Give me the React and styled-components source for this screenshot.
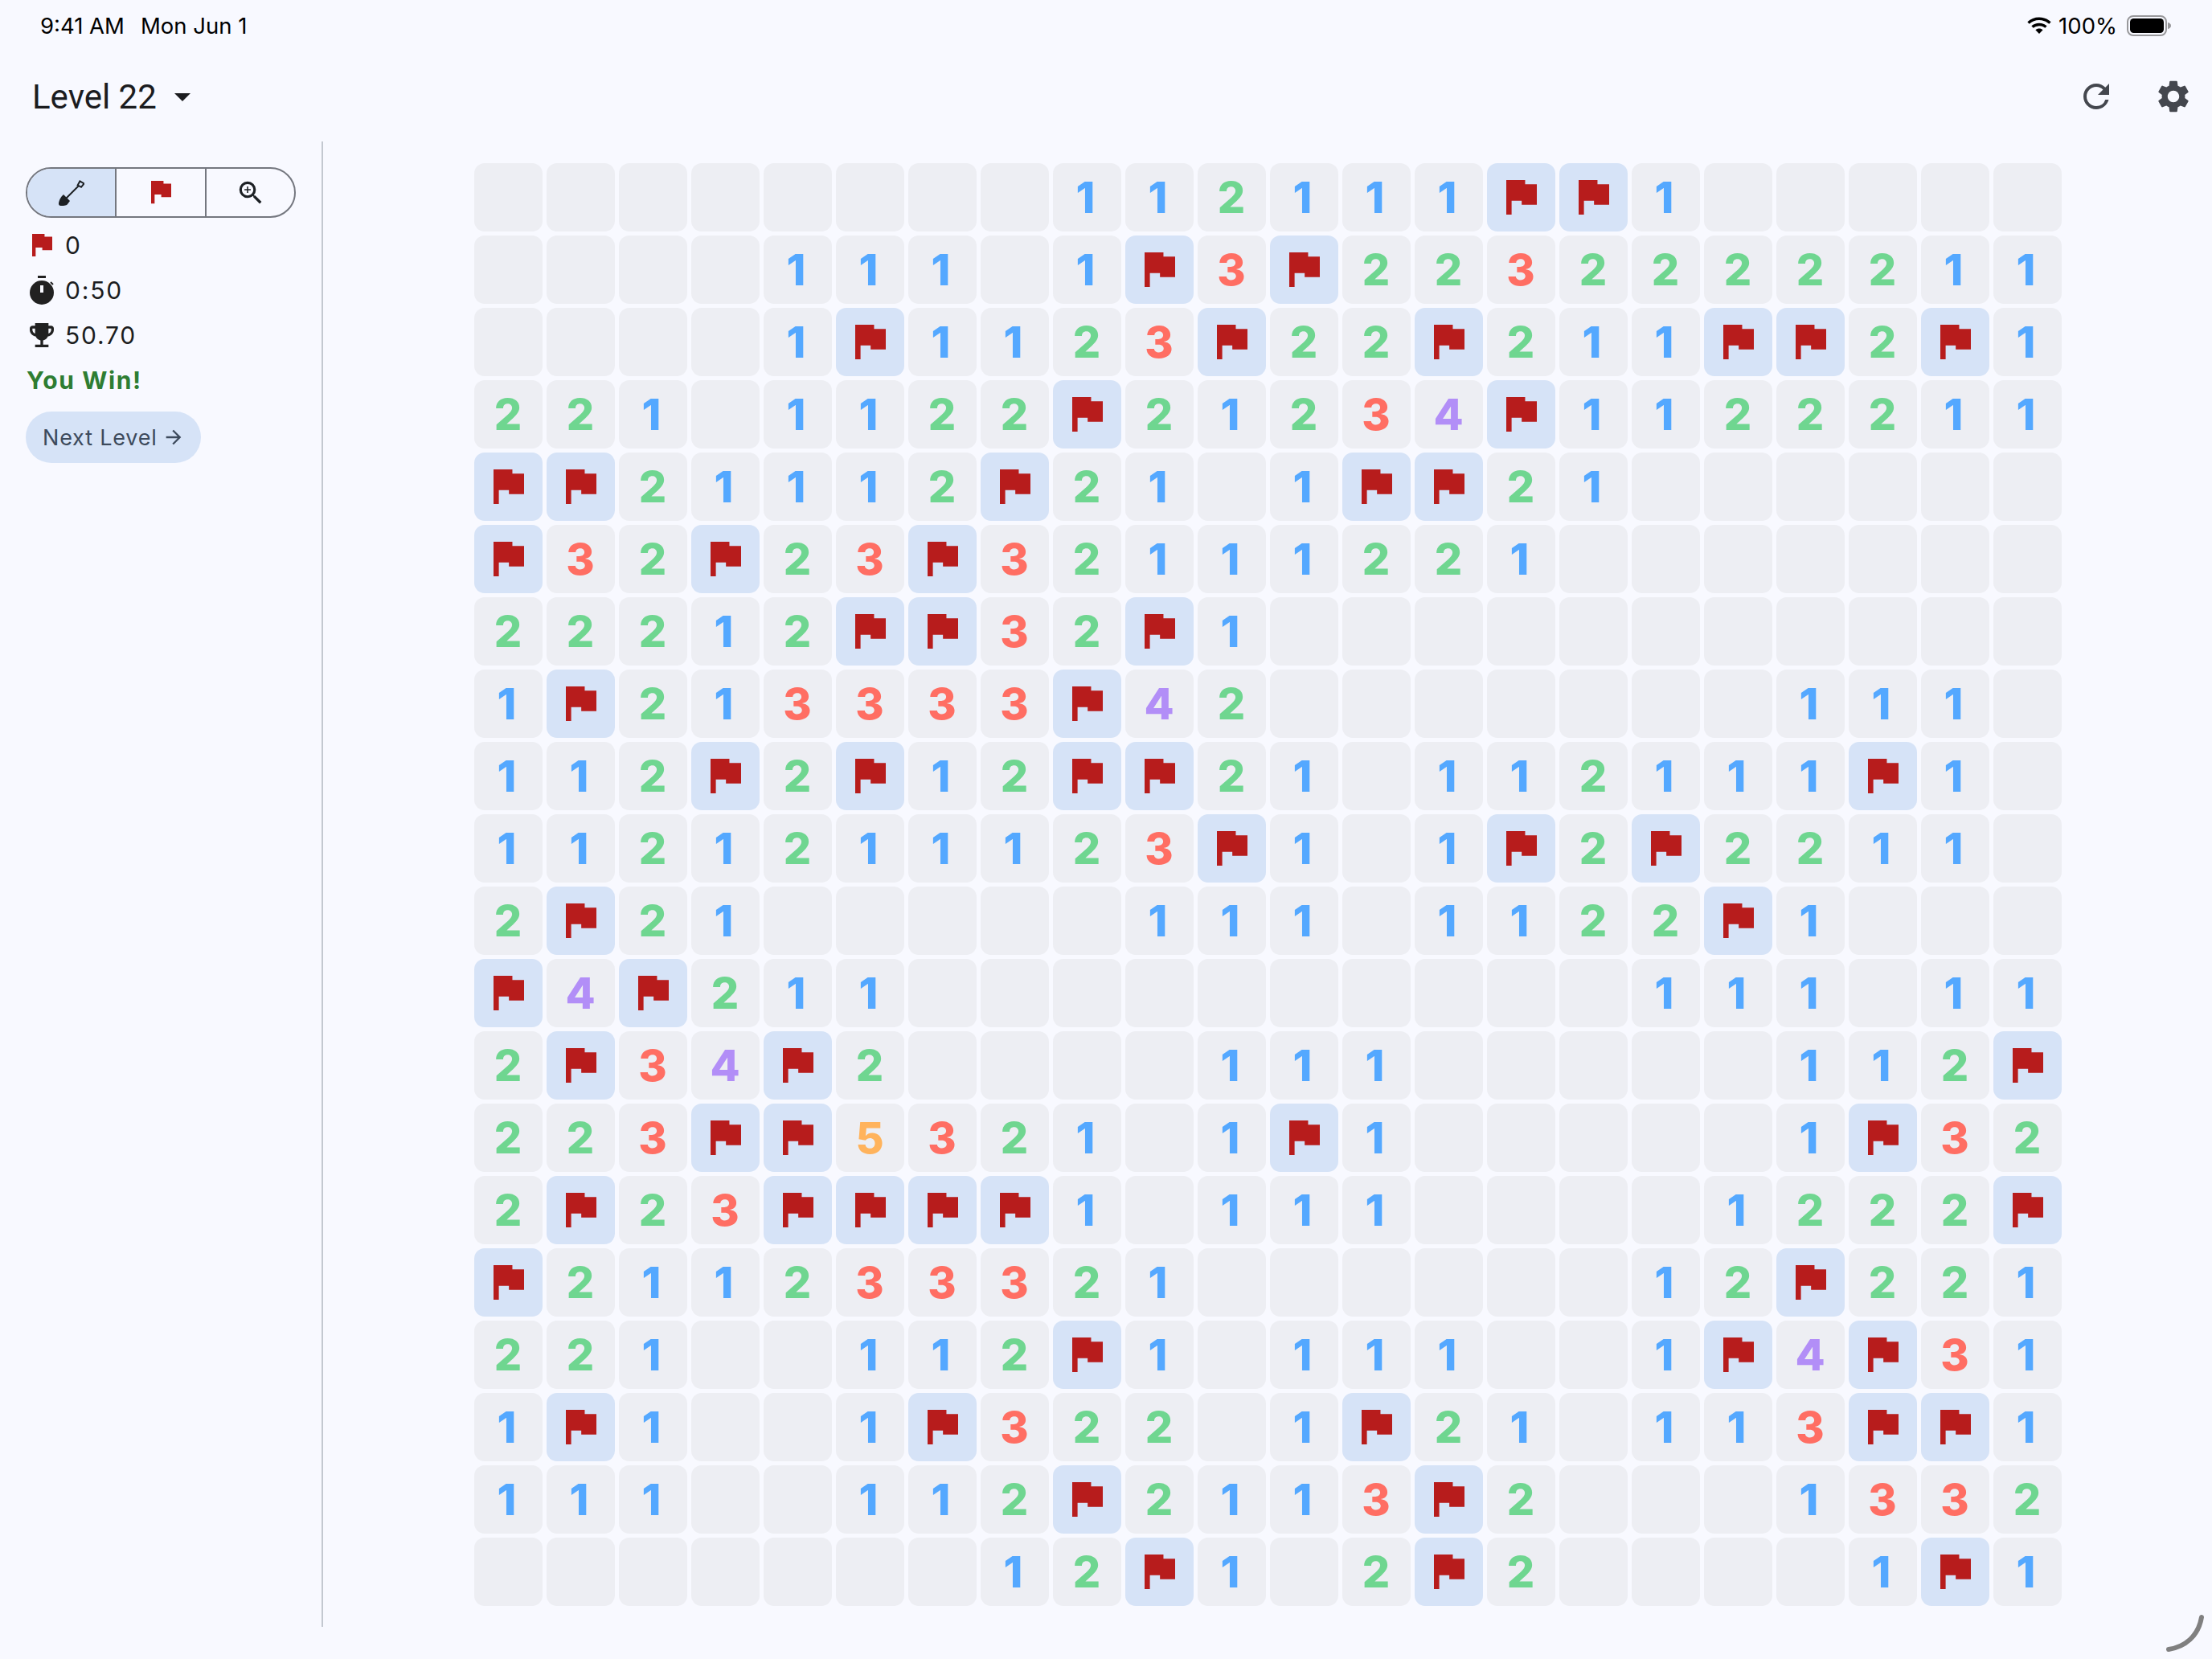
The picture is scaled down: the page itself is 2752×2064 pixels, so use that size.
import React from 'react'
import styled, { createGlobalStyle } from 'styled-components'
import { MdArrowDropDown, MdRefresh, MdSettings, MdZoomIn, MdArrowForward, MdEmojiEvents } from 'react-icons/md'

const ROWS = [
  '........112111FF1.....',
  '....111.1F3F2232222211',
  '....1F1123F22F2 11FF2F1',
  '221.1122F2123 4F112221 1',
  'FF211 12F21.1FF21......',
  'F32F23F3211122 1.......',
  '2221 2FF32F1...........',
  '1F21 3333F42.......111.',
  '112F2F12FF21.112111F1.',
  '11212111 23F1.1F2F2211.',
  '2F21.....111.1122F1...',
  'F4F211..........111.11',
  '2F34F2....111.....112F',
  '223FF5321.1F1.....1F32',
  '2F23FFFF1.111....1222F',
  'F21123332 1......12F221',
  '221..112F1.111..1F4F31',
  '1F1..1F3 22.1F21.113FF1',
  '111..112F2113F2...1332',
  '.......12F1.2F2....1F1',
].map(row => row.replace(/ /g, ''))

const DIGIT_COLORS = {
  1: '#54a8ff',
  2: '#6fd690',
  3: '#ff6e63',
  4: '#b28ef7',
  5: '#ffb35c',
}

const GlobalStyle = createGlobalStyle`
  html, body {
    margin: 0;
    padding: 0;
    background: #f8f9ff;
  }
`

const Page = styled.div`
  width: 2752px;
  height: 2064px;
  position: relative;
  overflow: hidden;
  display: flex;
  flex-direction: column;
  background: #f8f9ff;
  font-family: Inter, sans-serif;
  color: #1c1d20;
`

const StatusBar = styled.div`
  height: 64px;
  padding: 0 50px 0 50px;
  display: flex;
  align-items: center;
  justify-content: space-between;
  font-size: 27.5px;
  color: #000;
`

const StatusGroup = styled.div`
  display: flex;
  align-items: center;
  gap: ${p => p.$gap}px;
`

const Toolbar = styled.div`
  height: 112px;
  display: flex;
  align-items: center;
  justify-content: space-between;
  padding-left: 40px;
`

const LevelPicker = styled.div`
  display: flex;
  align-items: center;
  font-family: Roboto, sans-serif;
  font-size: 42px;
  color: #1b1c1f;
  svg {
    margin-left: 8px;
  }
`

const ToolbarActions = styled.div`
  display: flex;
`

const IconButton = styled.div`
  width: 96px;
  height: 96px;
  display: flex;
  align-items: center;
  justify-content: center;
  color: #44474e;
`

const Body = styled.div`
  flex: 1;
  display: flex;
  padding-bottom: 40px;
`

const Sidebar = styled.aside`
  width: 402px;
  flex: none;
  box-sizing: border-box;
  border-right: 2px solid #c3c8d0;
  padding: 32px 0 0 32px;
`

const ModeSwitch = styled.div`
  width: 336px;
  height: 63px;
  box-sizing: border-box;
  border: 2px solid #74777f;
  border-radius: 32px;
  overflow: hidden;
  display: grid;
  grid-template-columns: 111px 112px 1fr;
`

const ModeButton = styled.div`
  display: flex;
  align-items: center;
  justify-content: center;
  background: ${p => (p.$active ? '#d6e3f7' : 'transparent')};
  border-right: ${p => (p.$last ? 'none' : '2px solid #74777f')};
`

const Stats = styled.div`
  margin-top: 6px;
  display: flex;
  flex-direction: column;
`

const StatRow = styled.div`
  height: 56px;
  display: flex;
  align-items: center;
  gap: 9px;
  font-size: 30px;
  letter-spacing: 1.8px;
  color: #1c1d20;
`

const StatIcon = styled.div`
  width: 40px;
  height: 40px;
  display: flex;
  align-items: center;
  justify-content: center;
  color: #212121;
`

const WinText = styled.div`
  margin: 6px 0 0 1px;
  height: 44px;
  line-height: 44px;
  font-size: 30px;
  font-weight: 700;
  letter-spacing: 1.6px;
  color: #2e7d32;
`

const NextButton = styled.div`
  margin-top: 17px;
  width: 218px;
  height: 64px;
  box-sizing: border-box;
  padding-left: 21px;
  border-radius: 32px;
  background: #d6e3f7;
  color: #3d4a5c;
  display: flex;
  align-items: center;
  gap: 6px;
  font-size: 27px;
  letter-spacing: 0.8px;
`

const BoardArea = styled.main`
  flex: 1;
  display: flex;
  justify-content: center;
  padding: 27px 0 0 1px;
`

const Board = styled.div`
  display: grid;
  grid-template-columns: repeat(22, 85px);
  grid-auto-rows: 85px;
  gap: 5px;
  align-self: flex-start;
`

const Cell = styled.div`
  border-radius: 13px;
  box-sizing: border-box;
  padding-right: ${p => (p.$value === '1' ? 4 : p.$flagged ? 0 : 1)}px;
  background: ${p => (p.$flagged ? '#d6e3f7' : '#edeef3')};
  display: flex;
  align-items: center;
  justify-content: center;
  font-size: 54px;
  font-weight: 800;
  color: ${p => DIGIT_COLORS[p.$value] || 'transparent'};
`

const CornerArc = styled.svg`
  position: absolute;
  right: 0;
  bottom: 0;
`

const FlagIcon = ({ size = 38 }) => (
  <svg width={size} height={size * 130 / 115} viewBox="0 0 115 130">
    <path fill="#b71c1c" d="M0 0H71V16H115V93H58V78H20V130H0Z" />
  </svg>
)

const ShovelIcon = () => (
  <svg width="32" height="32" viewBox="0 0 32 32">
    <path d="M9 23L25 7" stroke="#1c2024" strokeWidth="2" fill="none" />
    <path d="M23.6 6.4L26.4 1.4L31.6 4.4L28 8.8Z" stroke="#1c2024" strokeWidth="2" fill="none" />
    <path fill="#1c2024" d="M6 18L14 26L11 30C9.5 32 5 32 2.5 32C1 32 0 31 0 29.5C0 26 2.5 21 6 18Z" />
  </svg>
)

const TimerIcon = () => (
  <svg width="30" height="36" viewBox="0 0 30 36">
    <rect x="10" y="0" width="10" height="3" fill="#212121" />
    <circle cx="15" cy="21" r="15" fill="#212121" />
    <path d="M26 8L29 11" stroke="#212121" strokeWidth="2" />
    <rect x="13" y="12" width="4" height="9" fill="#f8f9ff" />
  </svg>
)

const WifiIcon = () => (
  <svg width="30" height="22" viewBox="0 0 30 22">
    <path d="M1.5 7.5C9 0.5 21 0.5 28.5 7.5" stroke="#000" strokeWidth="3.4" fill="none" />
    <path d="M6.5 12.5C11 8.4 19 8.4 23.5 12.5" stroke="#000" strokeWidth="3.4" fill="none" />
    <path fill="#000" d="M10.4 16.2C13 14 17 14 19.6 16.2L15 21Z" />
  </svg>
)

const BatteryIcon = () => (
  <svg width="59" height="26" viewBox="-3 0 59 26">
    <rect x="1" y="1" width="48" height="24" rx="7" fill="none" stroke="#98989b" strokeWidth="2" />
    <rect x="4" y="4" width="42" height="18" rx="4.5" fill="#000" />
    <path fill="#98989b" d="M51 9C53.5 9.6 55 11 55 13C55 15 53.5 16.4 51 17Z" />
  </svg>
)

function App() {
  return (
    <Page>
      <GlobalStyle />
      <StatusBar>
        <StatusGroup $gap={20}>
          <span>9:41 AM</span>
          <span>Mon Jun 1</span>
        </StatusGroup>
        <StatusGroup $gap={9}>
          <WifiIcon />
          <span>100%</span>
          <BatteryIcon />
        </StatusGroup>
      </StatusBar>

      <Toolbar>
        <LevelPicker>
          Level 22
          <MdArrowDropDown size={48} />
        </LevelPicker>
        <ToolbarActions>
          <IconButton><MdRefresh size={48} /></IconButton>
          <IconButton><MdSettings size={48} /></IconButton>
        </ToolbarActions>
      </Toolbar>

      <Body>
        <Sidebar>
          <ModeSwitch>
            <ModeButton $active><ShovelIcon /></ModeButton>
            <ModeButton><FlagIcon size={25} /></ModeButton>
            <ModeButton $last><MdZoomIn size={38} color="#1c2024" /></ModeButton>
          </ModeSwitch>
          <Stats>
            <StatRow><StatIcon><FlagIcon size={25} /></StatIcon>0</StatRow>
            <StatRow><StatIcon><TimerIcon /></StatIcon>0:50</StatRow>
            <StatRow><StatIcon><MdEmojiEvents size={40} /></StatIcon>50.70</StatRow>
          </Stats>
          <WinText>You Win!</WinText>
          <NextButton>
            Next Level
            <MdArrowForward size={28} />
          </NextButton>
        </Sidebar>

        <BoardArea>
          <Board>
            {ROWS.map((row, r) =>
              row.split('').map((ch, c) => (
                <Cell key={`${r}-${c}`} $flagged={ch === 'F'} $value={ch}>
                  {ch === 'F' ? <FlagIcon /> : ch === '.' ? '' : ch}
                </Cell>
              ))
            )}
          </Board>
        </BoardArea>
      </Body>

      <CornerArc width="70" height="70" viewBox="0 0 70 70">
        <path d="M16 58C36 55 53 42 57 18" stroke="#808080" strokeWidth="6" strokeLinecap="round" fill="none" />
      </CornerArc>
    </Page>
  )
}

export default App
